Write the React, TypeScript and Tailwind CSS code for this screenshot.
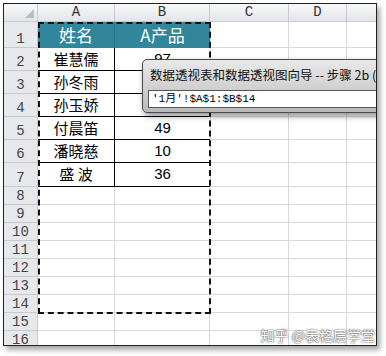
const cols = [
  { label: 'A', w: 'w-[77px]' },
  { label: 'B', w: 'w-[95px]' },
  { label: 'C', w: 'w-[79px]' },
  { label: 'D', w: 'w-[58px]' },
  { label: '', w: 'flex-1' },
];

const rows = [
  { n: 1, h: 'h-[26px]', a: '姓名', b: 'A产品', head: true },
  { n: 2, h: 'h-[23px]', a: '崔慧儒', b: '97', table: true },
  { n: 3, h: 'h-[23px]', a: '孙冬雨', b: '', table: true },
  { n: 4, h: 'h-[23px]', a: '孙玉娇', b: '', table: true },
  { n: 5, h: 'h-[23px]', a: '付晨笛', b: '49', table: true },
  { n: 6, h: 'h-[23px]', a: '潘晓慈', b: '10', table: true },
  { n: 7, h: 'h-[24px]', a: '盛 波', b: '36', table: true },
  { n: 8, h: 'h-[18px]' },
  { n: 9, h: 'h-[18px]' },
  { n: 10, h: 'h-[18px]' },
  { n: 11, h: 'h-[18px]' },
  { n: 12, h: 'h-[18px]' },
  { n: 13, h: 'h-[18px]' },
  { n: 14, h: 'h-[18px]' },
  { n: 15, h: 'h-[18px]' },
  { n: 16, h: 'h-[18px]' },
];

const cjk = "font-['Noto_Sans_CJK_SC',sans-serif]";
const mono = "font-['Liberation_Mono','Noto_Sans_CJK_SC',monospace]";

function Row({ r }: { r: (typeof rows)[number] }) {
  return (
    <div className={`flex ${r.h}`}>
      <div className={`w-[34px] shrink-0 flex items-end justify-center pb-[1px] bg-[#e6e8ec] border-r border-b border-[#c6c9ce] text-[14px] leading-none text-[#444] ${mono}`}>
        {r.n}
      </div>
      {r.head ? (
        <>
          <div className={`w-[77px] bg-[#31869b] border-r border-[#2a7285] flex items-center justify-center text-white text-[17px] ${cjk}`}>
            {r.a}
          </div>
          <div className={`w-[95px] bg-[#31869b] flex items-center justify-center text-white text-[17px] ${cjk}`}>
            {r.b}
          </div>
        </>
      ) : r.table ? (
        <>
          <div className={`w-[77px] border-r border-b border-black flex items-center justify-center text-[15px] text-black ${cjk}`}>
            {r.a}
          </div>
          <div className={`w-[95px] border-b border-black flex items-center justify-center text-[15px] text-black font-['Liberation_Sans',sans-serif]`}>
            {r.b}
          </div>
        </>
      ) : (
        <>
          <div className="w-[77px] border-r border-b border-[#d8d8d8]" />
          <div className="w-[95px] border-r border-b border-[#d8d8d8]" />
        </>
      )}
      <div className={`w-[79px] border-r border-b border-[#d8d8d8] ${r.head || r.table ? 'border-l border-l-[#d8d8d8]' : ''}`} />
      <div className="w-[58px] border-r border-b border-[#d8d8d8]" />
      <div className="flex-1 border-b border-[#d8d8d8]" />
    </div>
  );
}

export default function App() {
  return (
    <div className="w-[386px] h-[356px] bg-white pt-[3px] pl-[3px]">
      <div className="relative w-[374px] h-[343px] border border-[#222] overflow-hidden bg-white shadow-[3px_4px_5px_rgba(0,0,0,0.35)]">
        <div className="flex h-[18px] bg-gradient-to-b from-[#f7f8f9] to-[#e3e5e9] border-b border-[#c6c9ce]">
          <div className="w-[34px] shrink-0 border-r border-[#c6c9ce] flex items-end justify-end p-[3px]">
            <div className="w-0 h-0 border-l-[9px] border-l-transparent border-b-[9px] border-b-[#b9bcc1]" />
          </div>
          {cols.map((c, i) => (
            <div
              key={i}
              className={`${c.w} ${i < 4 ? 'border-r border-[#c6c9ce]' : ''} flex items-center justify-center text-[14px] text-[#333] ${mono}`}
            >
              {c.label}
            </div>
          ))}
        </div>
        {rows.map((r) => (
          <Row key={r.n} r={r} />
        ))}

        {/* copy marquee around A1:B14 */}
        <div className="absolute left-[34px] top-[18px] w-[173px] h-[292px] border-2 border-dashed border-[#111] pointer-events-none" />

        {/* wizard dialog */}
        <div className="absolute left-[138px] top-[55px] w-[260px] h-[54px] rounded-[5px] border border-[#4a4a4a] bg-gradient-to-b from-[#e9e9e9] via-[#d2d2d2] to-[#b9b9b9] shadow-[2px_3px_6px_rgba(0,0,0,0.45)]">
          <div className={`h-[30px] pl-[7px] flex items-center text-[12.5px] text-[#111] whitespace-nowrap ${cjk}`}>
            数据透视表和数据透视图向导 -- 步骤 2b (共 3 步)
          </div>
          <div className="mx-[5px] h-[18px] border border-[#555] bg-white flex items-center pl-[3px] text-[11px] text-black whitespace-nowrap">
            <span className={mono}>'1月'!$A$1:$B$14</span>
          </div>
        </div>

        <div className={`absolute right-[1px] bottom-[-1px] text-[14px] text-white whitespace-nowrap [text-shadow:0_0_2px_#555,0_0_1px_#333] ${cjk}`}>
          知乎 @表格层学堂
        </div>
      </div>
    </div>
  );
}
